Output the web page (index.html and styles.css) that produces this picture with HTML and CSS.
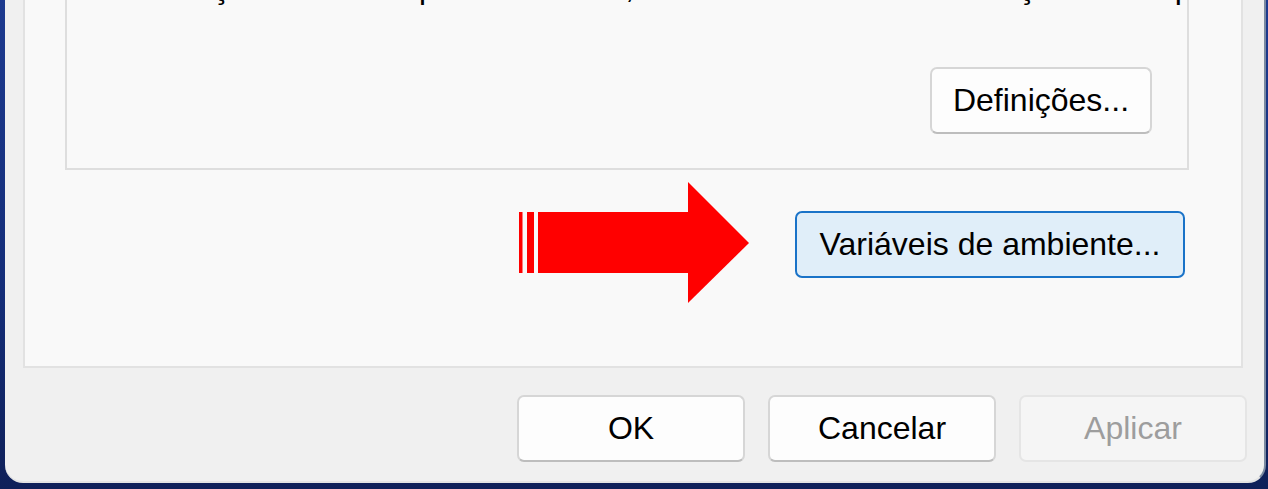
FILE: index.html
```html
<!DOCTYPE html>
<html lang="pt">
<head>
<meta charset="utf-8">
<title>Propriedades do Sistema</title>
<link rel="stylesheet" href="styles.css">
</head>
<body>
<div class="window">
  <div class="tab-page">
    <div class="group">
      <div class="group-text">Informações de arranque do sistema, falha do sistema e informações de depuração</div>
      <div class="group-actions">
        <button class="btn btn-def">Definições...</button>
      </div>
    </div>
    <div class="env-row">
      <svg class="arrow" width="231" height="122" viewBox="0 0 231 122" aria-hidden="true">
        <rect x="1" y="30" width="3.5" height="61" fill="#ff0000"/>
        <rect x="9" y="30" width="7" height="61" fill="#ff0000"/>
        <rect x="20" y="30" width="151" height="61" fill="#ff0000"/>
        <polygon points="170,0 231,61 170,121" fill="#ff0000"/>
      </svg>
      <button class="btn btn-env">Variáveis de ambiente...</button>
    </div>
  </div>
  <div class="footer">
    <button class="btn btn-foot">OK</button>
    <button class="btn btn-foot">Cancelar</button>
    <button class="btn btn-foot btn-disabled">Aplicar</button>
  </div>
</div>
</body>
</html>
```

FILE: styles.css
```css
html, body {
  margin: 0;
  padding: 0;
}
body {
  width: 1268px;
  height: 489px;
  overflow: hidden;
  background: linear-gradient(180deg, #1d3a8f 0%, #142d78 60%, #0f2059 100%);
  font-family: "Liberation Sans", Arial, sans-serif;
}
.window {
  box-sizing: border-box;
  margin-left: 5px;
  width: 1261px;
  height: 483px;
  background: #f0f0f0;
  border-right: 2px solid #7b8aa1;
  border-bottom: 2px solid #e4e4e4;
  border-radius: 0 0 18px 18px;
  padding-left: 18px;
  display: flex;
  flex-direction: column;
  overflow: hidden;
}
.tab-page {
  box-sizing: border-box;
  width: 1220px;
  height: 368px;
  background: #f9f9f9;
  border: 2px solid #e2e2e2;
  border-top: none;
  display: flex;
  flex-direction: column;
  overflow: hidden;
}
.group {
  margin: -40px 52px 0 40px;
  border: 2px solid #dedede;
  padding: 0 35px 34px 0;
  display: flex;
  flex-direction: column;
}
.group-text {
  margin-top: 7px;
  padding-left: 37px;
  font-size: 32px;
  line-height: 37px;
  height: 37px;
  color: #000;
  white-space: nowrap;
}
.group-actions {
  margin-top: 61px;
  display: flex;
  justify-content: flex-end;
}
.btn {
  box-sizing: border-box;
  height: 67px;
  font-family: "Liberation Sans", Arial, sans-serif;
  font-size: 32px;
  color: #000;
  background: #fdfdfd;
  border: 2px solid #d6d6d6;
  border-bottom-color: #bdbdbd;
  border-radius: 7px;
  padding: 0;
  display: flex;
  align-items: center;
  justify-content: center;
}
.btn-def {
  width: 222px;
}
.env-row {
  margin-top: 12px;
  padding-right: 56px;
  display: flex;
  justify-content: flex-end;
  align-items: flex-start;
  gap: 46px;
}
.arrow {
  display: block;
}
.btn-env {
  margin-top: 29px;
  width: 390px;
  background: #e0eef9;
  border: 2px solid #1a73c8;
  border-radius: 7px;
}
.footer {
  display: flex;
  justify-content: flex-end;
  gap: 23px;
  padding: 27px 17px 0 0;
}
.btn-foot {
  width: 228px;
}
.btn-disabled {
  color: #9d9d9d;
  background: #f5f5f5;
  border-color: #e5e5e5;
}
```
